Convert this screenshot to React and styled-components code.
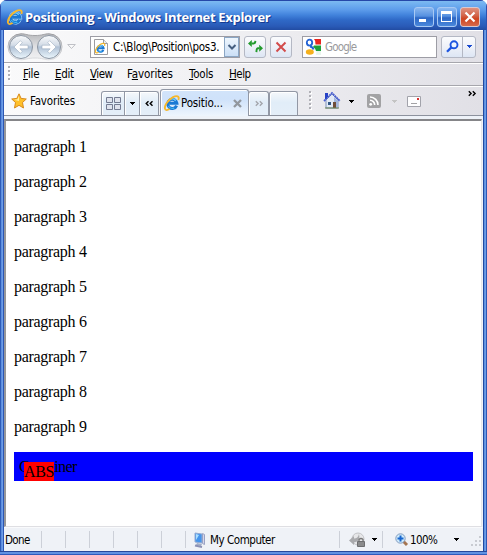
import React from "react";
import styled, { createGlobalStyle, css } from "styled-components";

const GlobalStyle = createGlobalStyle`
  html, body { margin: 0; padding: 0; overflow: hidden; background: #fff; }
  *, *::before, *::after { box-sizing: border-box; }
`;

const Window = styled.div`
  width: 487px;
  height: 555px;
  display: flex;
  flex-direction: column;
  border-radius: 7px 7px 0 0;
  overflow: hidden;
  background: linear-gradient(90deg, #2f5cb8 0 1px, #5d8fe0 1px 2px, #6d9ce6 2px 3px, #2c57b4 3px 4px, transparent 4px 483px, #2049a0 483px 484px, #5d90e0 484px 485px, #6a9ce6 485px 486px, #2c57b4 486px), #3162c4;
  font-family: "DejaVu Sans Condensed", "DejaVu Sans", sans-serif;
  font-size: 11.5px;
  color: #000;
`;

const TitleBar = styled.header`
  height: 30px;
  flex: none;
  display: flex;
  align-items: center;
  padding: 3px 6px 0 6px;
  border-top: 1px solid #2648a8;
  border-left: 1px solid #2d52b0;
  border-right: 1px solid #2d52b0;
  background: linear-gradient(180deg, #7dbaf0 0, #71b0f0 3px, #5c9bea 9px, #4283dc 14px, #2f69c7 19px, #2a5bb8 25px, #2450a8 28px, #21479c 30px);
`;

const Title = styled.h1`
  margin: 0 auto 0 2px;
  font: bold 13px/18px "Open Sans", sans-serif;
  letter-spacing: -0.32px;
  white-space: nowrap;
  color: #fff;
  text-shadow: 1px 1px 0 #153a91;
`;

const CaptionButton = styled.button`
  width: 20px;
  height: 20px;
  margin: 0 0 1px 3px;
  padding: 0;
  display: flex;
  align-items: center;
  justify-content: center;
  border: 1px solid ${(p) => (p.$close ? "#d8c9d0" : "#a8c9f4")};
  border-radius: 3px;
  background: ${(p) =>
    p.$close
      ? "linear-gradient(180deg, #de9280, #d3664c 40%, #cf4420 60%, #d66a4c)"
      : "linear-gradient(180deg, #8ab7ef, #5590e0 45%, #2c66c4 55%, #4a88dc)"};
`;

const Client = styled.div`
  flex: 1;
  min-height: 0;
  margin: 0 4px;
  display: flex;
  flex-direction: column;
  background: #eef2f8;
`;

const Bar = styled.div`
  flex: none;
  display: flex;
  align-items: center;
  background: linear-gradient(90deg, #fafafb, #f0f0f3 45%, #e1e0e6);
`;

const NavBar = styled(Bar)`
  height: 32px;
  border-top: 1px solid #fff;
  padding-left: 3px;
`;

const MenuBar = styled(Bar)`
  height: 24px;
  border-top: 1px solid #a6a6ac;
  border-bottom: 1px solid #a6a6ac;
  box-shadow: inset 0 1px #fff;
  padding-left: 4px;
`;

const TabBar = styled(Bar)`
  height: 30px;
  border-bottom: 1px solid #8d929e;
  border-top: 1px solid #fff;
`;

const Label = styled.span`
  flex: none;
  width: ${(p) => (p.$w ? `${p.$w}px` : "auto")};
  margin-left: ${(p) => p.$ml || 0}px;
  letter-spacing: ${(p) => p.$ls || 0}px;
  line-height: 14px;
  white-space: nowrap;
  color: ${(p) => (p.$dim ? "#99999c" : "#000")};
`;

const Icon = styled.svg`
  flex: none;
  display: block;
  overflow: visible;
  margin-left: ${(p) => p.$ml || 0}px;
`;

const field = css`
  height: 22px;
  display: flex;
  align-items: center;
  border: 1px solid #9d9da5;
  background: #fff;
`;

const AddressField = styled.div`
  ${field}
  width: 150px;
  margin-left: 14px;
  padding-left: 3px;
`;

const SearchField = styled.div`
  ${field}
  width: 135px;
  margin-left: 10px;
  padding-left: 2px;
`;

const ComboButton = styled.button`
  width: 15px;
  height: 20px;
  margin: 0 0 0 auto;
  padding: 0;
  display: grid;
  place-items: center;
  border: 1px solid #8ba6c4;
  background: linear-gradient(#eef6fe, #cbdff6);
`;

const ToolButton = styled.button`
  width: ${(p) => p.$w || 22}px;
  height: 22px;
  margin: 0 0 0 ${(p) => p.$ml}px;
  padding: 0;
  display: flex;
  align-items: center;
  justify-content: center;
  border: 1px solid #b4b8c4;
  border-radius: 3px;
  background: linear-gradient(#fbfcfe, #eef1f8 50%, #dde6f4);
`;

const SplitCell = styled.span`
  width: ${(p) => p.$w}px;
  height: 20px;
  display: grid;
  place-items: center;
  & + & { border-left: 1px solid #b4b8c4; }
`;

const Tab = styled.div`
  flex: none;
  align-self: flex-end;
  width: ${(p) => p.$w}px;
  height: ${(p) => (p.$active ? 27 : 24)}px;
  margin-left: ${(p) => p.$ml || 0}px;
  margin-bottom: ${(p) => (p.$active ? -1 : 0)}px;
  display: flex;
  align-items: center;
  justify-content: ${(p) => (p.$active ? "flex-start" : "center")};
  border: 1px solid #9298a5;
  border-bottom: 0;
  border-radius: ${(p) => p.$radius || "3px 3px 0 0"};
  background: ${(p) =>
    p.$active ? "linear-gradient(#d2e4fa, #cfe2fa 35%, #eef5fd)" : "linear-gradient(#f5f8fb, #e1edf8 45%, #e4eef8)"};
  box-shadow: inset 1px 1px #fff;
`;

const Overflow = styled.span`
  align-self: flex-start;
  display: block;
  margin: 4px 0 0 47px;
`;

const Viewport = styled.main`
  flex: 1;
  min-height: 0;
  margin: 3px 1px 0 0;
  border: solid;
  border-width: 2px 1px 1px 2px;
  border-color: #858588 #e6e6ea #dfdfe3 #96969a;
  padding: 16px 8px 0;
  background: #fff;
  font: 16px/19px "Liberation Serif", serif;
`;

const Paragraph = styled.p`
  margin: 0 0 16px;
  letter-spacing: -0.31px;
`;

const Container = styled.div`
  position: relative;
  height: 29px;
  padding: 5px;
  background: #00f;
  letter-spacing: -0.6px;
`;

const Absolute = styled.div`
  position: absolute;
  left: 10px;
  top: 10px;
  width: 30px;
  height: 19px;
  background: #f00;
  letter-spacing: -0.35px;
`;

const StatusBar = styled.footer`
  flex: none;
  height: 24px;
  display: flex;
  align-items: center;
  border-top: 1px solid #f9fafc;
  background: #eff2f7;
`;

const Divider = styled.i`
  flex: none;
  width: 1px;
  height: 17px;
  margin-left: ${(p) => p.$ml}px;
  background: #ccd0d8;
`;

const BottomFrame = styled.div`
  flex: none;
  height: 4px;
  background: linear-gradient(#26499c 0 1px, #6192e2 1px 3px, #2d5bbd 3px);
`;

function LogoShape({ halo }) {
  const bowl = "M12.6 10.6A4.6 4.6 0 1 1 12.9 8.3H5.4";
  return (
    <>
      {halo && <path d={bowl} fill="none" stroke="#a9dcfa" strokeWidth="4.2" />}
      <path d={bowl} fill="none" stroke="#1a78d4" strokeWidth="3" />
      <path d="M4.4 6.2Q8 1.8 11.8 5.6" fill="none" stroke="#6ccaf8" strokeWidth="1.5" />
      <path d="M4.2 11q2.6 3.6 6 2" fill="none" stroke="#45b7f0" strokeWidth="1.2" />
      <path d="M14.4 5C15.8 1.2 12.8.1 9 2.1 4.2 4.8.2 10.4.9 13.6c.4 1.9 2.5 1.8 4.7.5" fill="none" stroke="#f5b82c" strokeWidth="1.8" />
    </>
  );
}

function IELogo({ halo, ml }) {
  return (
    <Icon width="16" height="16" viewBox="0 0 16 16" $ml={ml}>
      <LogoShape halo={halo} />
    </Icon>
  );
}

function Arrow({ ml, color = "#000" }) {
  return (
    <Icon width="5" height="3" viewBox="0 0 5 3" $ml={ml} shapeRendering="crispEdges">
      <path d="M0 0h5v1H4v1H3v1H2V2H1V1H0z" fill={color} />
    </Icon>
  );
}

function Grip({ ml, rows = 4 }) {
  return (
    <Icon width="4" height={rows * 4} $ml={ml} shapeRendering="crispEdges">
      {Array.from({ length: rows }, (_, i) => (
        <g key={i}>
          <path d={`M1 ${i * 4 + 1}h2v2h-2z`} fill="#fff" />
          <path d={`M0 ${i * 4}h2v2h-2z`} fill="#b0b0b6" />
        </g>
      ))}
    </Icon>
  );
}

function Chevrons({ color = "#000", left }) {
  return (
    <Icon width="8" height="5" viewBox="0 0 8 5">
      <path
        d={left ? "M3.5.2 1.2 2.5l2.3 2.3M7.5.2 5.2 2.5l2.3 2.3" : "M.8.2l2.3 2.3L.8 4.8M4.8.2l2.3 2.3-2.3 2.3"}
        fill="none" stroke={color} strokeWidth="1.4"
      />
    </Icon>
  );
}

function TravelButtons() {
  return (
    <Icon width="56" height="28" viewBox="0 0 56 28">
      <defs>
        <linearGradient id="travelFill" x1="0" y1="0" x2="0" y2="1">
          <stop offset="0" stopColor="#fafbfc" /><stop offset=".42" stopColor="#d3dce7" />
          <stop offset=".5" stopColor="#b0c1d5" /><stop offset="1" stopColor="#ecf7fe" />
        </linearGradient>
        <linearGradient id="travelRim" x1="0" y1="0" x2="0" y2="1">
          <stop offset="0" stopColor="#b8b9bc" /><stop offset=".5" stopColor="#dfe0e3" /><stop offset="1" stopColor="#f2f2f4" />
        </linearGradient>
        <linearGradient id="travelEdge" x1="0" y1="0" x2="0" y2="1">
          <stop offset="0" stopColor="#9d9ea2" /><stop offset="1" stopColor="#dcdde0" />
        </linearGradient>
      </defs>
      <path d="M14 .8C19 .8 20 2.5 28 2.5S37 .8 42 .8a13 13 0 0 1 0 26c-5 0-6-1.8-14-1.8s-9 1.8-14 1.8A13 13 0 0 1 14 .8z" fill="url(#travelRim)" stroke="url(#travelEdge)" />
      {[14, 42].map((x) => (
        <g key={x}>
          <circle cx={x} cy="14" r="11.5" fill="url(#travelFill)" stroke="#8c96a3" />
          <path
            d={x === 14 ? "M7 14l6.3-6.3 2 2-2.5 2.5H21v3.6h-8.2l2.5 2.5-2 2z" : "M49 14l-6.3-6.3-2 2 2.5 2.5H35v3.6h8.2l-2.5 2.5 2 2z"}
            fill="#fff" stroke="#93a4b8" strokeWidth=".5"
          />
        </g>
      ))}
    </Icon>
  );
}

const menus = [
  ["File", 11, 32, -0.2], ["Edit", 0, 35, -0.35], ["View", 0, 37, -0.5], ["Favorites", 0, 62, -0.1], ["Tools", 0, 40, -0.2], ["Help", 0, 24, -0.5],
];

export default function App() {
  return (
    <>
      <GlobalStyle />
      <Window>
        <TitleBar>
          <IELogo halo />
          <Title>Positioning - Windows Internet Explorer</Title>
          <CaptionButton aria-label="Minimize">
            <Icon width="12" height="12"><path d="M1 8h7v3H1z" fill="#fff" /></Icon>
          </CaptionButton>
          <CaptionButton aria-label="Maximize">
            <Icon width="12" height="12"><path d="M0 0h11v11H0zM1 3h9v7H1z" fill="#fff" fillRule="evenodd" /></Icon>
          </CaptionButton>
          <CaptionButton $close aria-label="Close">
            <Icon width="12" height="12"><path d="M1.5 1.5l9 9m0-9l-9 9" stroke="#fff" strokeWidth="2.2" /></Icon>
          </CaptionButton>
        </TitleBar>
        <Client>
          <NavBar>
            <TravelButtons />
            <Icon width="9" height="5" $ml={4}><path d="M.7.5h7.6l-3.8 4z" fill="#fafafa" stroke="#bfc0c6" /></Icon>
            <AddressField>
              <Icon width="14" height="16" viewBox="0 0 14 16">
                <path d="M.5.5h9l4 4v11H.5z" fill="#fff" stroke="#9c9ca0" /><path d="M9.5.5v4h4" fill="#eee" stroke="#9c9ca0" />
                <g transform="translate(.8 3.6) scale(.68)"><LogoShape /></g>
              </Icon>
              <Label $ml={5} $w={107} $ls={-0.28}>C:\Blog\Position\pos3.</Label>
              <ComboButton><Icon width="8" height="6"><path d="M.5 1L4 4.5 7.5 1" fill="none" stroke="#455f80" strokeWidth="2" /></Icon></ComboButton>
            </AddressField>
            <ToolButton $ml={4} aria-label="Refresh">
              <Icon width="15" height="13" viewBox="0 0 15 13">
                <path d="M0 3.5L3.8 0v7zM15 8.2l-3.8-3.5v7z" fill="#239a2d" />
                <path d="M3.5 3.5h2.3Q7.2 3.3 7.4.8M11.5 8.2H9.8q-1.3.2-1.4 3.9" fill="none" stroke="#239a2d" strokeWidth="1.9" />
              </Icon>
            </ToolButton>
            <ToolButton $ml={4} aria-label="Stop">
              <Icon width="12" height="12"><path d="M1.5 1.5l9 9m0-9l-9 9" stroke="#d34c4c" strokeWidth="2" /></Icon>
            </ToolButton>
            <SearchField>
              <Icon width="16" height="16" viewBox="0 0 16 16">
                <path d="M9 0h7v5.5h-5.5Q11 2 9 0z" fill="#e8251f" />
                <path d="M9 6.5h7V12h-5Q10.500 9 8 8z" fill="#1fa03a" />
                <path d="M11.500 12H16v4h-5z" fill="#e9f5ec" />
                <ellipse cx="4.500" cy="3.600" rx="2.700" ry="3" fill="#fff" stroke="#2463d4" strokeWidth="1.800" />
                <path d="M5 7.500q3 .5 3.500 3" fill="none" stroke="#2463d4" strokeWidth="2" />
                <ellipse cx="4.800" cy="13" rx="4" ry="2.700" fill="#f5b01c" />
              </Icon>
              <Label $dim $ml={4} $ls={-0.85}>Google</Label>
            </SearchField>
            <ToolButton $ml={4} $w={35} aria-label="Search">
              <SplitCell $w={20}><Icon width="13" height="13"><circle cx="8" cy="4.8" r="3.5" fill="#eef6ff" stroke="#1d55e0" strokeWidth="1.9" /><path d="M5.4 7.4L1 11.8" stroke="#1d55e0" strokeWidth="2.3" /></Icon></SplitCell>
              <SplitCell $w={13}><Arrow color="#1749cf" /></SplitCell>
            </ToolButton>
          </NavBar>
          <MenuBar>
            <Grip ml={0} />
            {menus.map(([name, ml, w, ls]) => {
              const key = name === "Favorites" ? 1 : 0;
              return (
                <Label key={name} $ml={ml} $w={w} $ls={ls}>
                  {name.slice(0, key)}<u>{name[key]}</u>{name.slice(key + 1)}
                </Label>
              );
            })}
          </MenuBar>
          <TabBar>
            <Icon width="16" height="16" viewBox="0 0 16 16" $ml={7}>
              <path d="M8 .8l2.1 4.6 5.2.6-3.8 3.5 1 5.5L8 12.3 3.5 15l1-5.5L.7 6l5.2-.6z" fill="#ffc02a" stroke="#d98a1c" strokeLinejoin="round" />
              <path d="M8 2.8L6.5 6.2l-3.4.6L8 8z" fill="#fff0a3" />
            </Icon>
            <Label $ml={3} $w={71} $ls={-0.2}>Favorites</Label>
            <Tab $w={24} $radius="3px 0 0 0">
              <Icon width="15" height="13"><path d="M.5.5h6v5h-6zM8.5.5h6v5h-6zM.5 7.5h6v5h-6zM8.5 7.5h6v5h-6z" fill="#dfe3ed" stroke="#747b91" /></Icon>
            </Tab>
            <Tab $w={16} $ml={-1} $radius="0"><Arrow /></Tab>
            <Tab $w={20} $ml={-1} $radius="0 3px 0 0"><Chevrons left /></Tab>
            <Tab $w={89} $active $ml={1}>
              <IELogo ml={3} />
              <Label $ml={1} $w={52} $ls={-0.15}>Positio...</Label>
              <Icon width="9" height="9"><path d="M1 1l7 7m0-7L1 8" stroke="#92979e" strokeWidth="2.3" /></Icon>
            </Tab>
            <Tab $w={21} $ml={-1}><Chevrons color="#a3a6ac" /></Tab>
            <Tab $w={29} $ml={0} />
            <Grip ml={11} rows={5} />
            <Icon width="18" height="18" viewBox="0 0 18 18" $ml={10}>
              <path d="M3 8l6-6 6 6v8H3z" fill="#e2eaf6" stroke="#7f93bd" /><path d="M11 5l4 4v7h-4z" fill="#a3b7dc" />
              <path d="M1 9l8-8 8 8" fill="none" stroke="#4a5fd0" strokeWidth="1.8" strokeDasharray="2 .5" />
              <path d="M2 1h3v4l-3 3z" fill="#2742c6" /><path d="M5 10h3v3H5z" fill="#315785" /><path d="M10 10h3v6h-3z" fill="#704e39" /><path d="M2 16h14" stroke="#6a8450" />
            </Icon>
            <Arrow ml={8} />
            <Icon width="14" height="14" $ml={13}>
              <rect width="14" height="14" rx="2" fill="#a2a2a4" />
              <circle cx="3.7" cy="10.3" r="1.4" fill="#fff" /><path d="M3 6.3a4.7 4.7 0 0 1 4.7 4.7M3 3a8 8 0 0 1 8 8" fill="none" stroke="#fff" strokeWidth="1.6" />
            </Icon>
            <Arrow ml={11} color="#c4c4c4" />
            <Icon width="14" height="11" $ml={10}><path d="M.5.5h13v10H.5z" fill="#fdfdfe" stroke="#a2a3ab" /><path d="M10 2h2v2h-2z" fill="#d93030" /><path d="M4 7.5h6" stroke="#a2a2a5" /></Icon>
            <Overflow><Chevrons /></Overflow>
          </TabBar>
          <Viewport>
            {Array.from({ length: 9 }, (_, i) => <Paragraph key={i}>paragraph {i + 1}</Paragraph>)}
            <Container>Container<Absolute>ABS</Absolute></Container>
          </Viewport>
          <StatusBar>
            <Label $ml={1} $w={36} $ls={-0.6}>Done</Label>
            <Divider $ml={0} />
            {[0, 1, 2, 3, 4, 5].map((n) => <Divider key={n} $ml={23} />)}
            <Icon width="14" height="16" viewBox="0 0 14 16" $ml={7}>
              <path d="M2 1l7 1v9l-7-1z" fill="#4595ec" stroke="#94abd2" /><path d="M3 2l3 1-3 5z" fill="#acdfff" /><path d="M9.5 1.5l2 1v10l-2-1z" fill="#d4d7ea" stroke="#9aa2c4" /><path d="M4 11l5 1-1 2-5-1z" fill="#a3aec6" /><path d="M2 13.5l7 1.5" stroke="#8a90b4" strokeWidth="2" />
            </Icon>
            <Label $ml={3} $w={65} $ls={-0.45}>My Computer</Label>
            <Divider $ml={64} />
            <Icon width="17" height="16" viewBox="0 0 17 16" $ml={9}>
              <circle cx="9" cy="7" r="6" fill="#e6e7e9" stroke="#c2c3c6" />
              <path d="M0 8.500L5 4v2.500q4 0 5-4.500 2 7-5 8.500V13z" fill="#a9aaad" />
              <path d="M10 10V7.5q2-2 4 0V10" fill="none" stroke="#777" strokeWidth="1.3" /><path d="M8.5 9.5h7v5h-7z" fill="#8a8b8c" stroke="#6d6e70" />
            </Icon>
            <Arrow ml={6} />
            <Divider $ml={5} />
            <Icon width="14" height="14" $ml={12}>
              <path d="M8 8l4 4" stroke="#a57550" strokeWidth="3" /><circle cx="5.5" cy="5.5" r="4.7" fill="#cfeafb" stroke="#829cbf" /><path d="M5.5 2.5v6m-3-3h6" stroke="#1766ce" strokeWidth="2" />
            </Icon>
            <Label $ml={1} $w={44} $ls={-0.6}>100%</Label>
            <Arrow />
            <Icon width="11" height="11" $ml={12}>
              {[[8, 0], [4, 4], [8, 4], [0, 8], [4, 8], [8, 8]].map(([x, y]) => <path key={`${x}-${y}`} d={`M${x} ${y + 2}h2v2h-2z`} fill="#c8cbd1" />)}
            </Icon>
          </StatusBar>
        </Client>
        <BottomFrame />
      </Window>
    </>
  );
}
